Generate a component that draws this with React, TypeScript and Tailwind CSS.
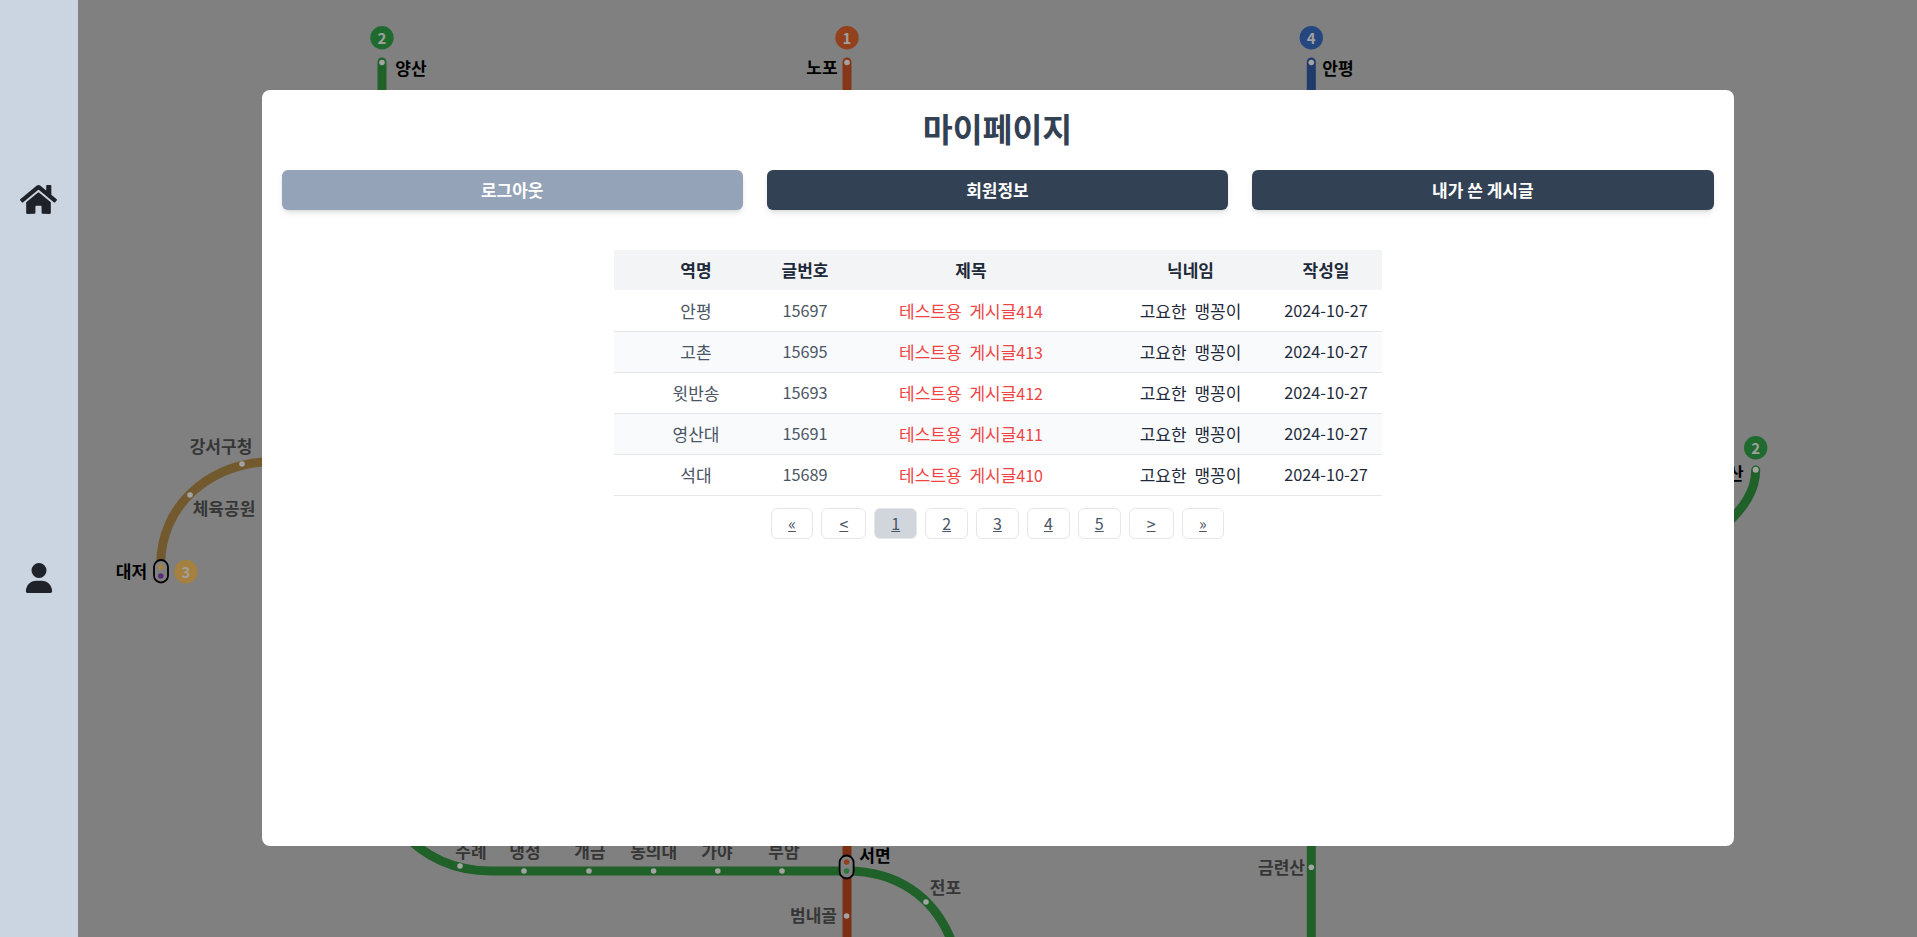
import React from 'react';
import { FaHome } from 'react-icons/fa';
import { FaUser } from 'react-icons/fa6';

const posts = [
  { station: '안평', id: 15697, no: 414 },
  { station: '고촌', id: 15695, no: 413 },
  { station: '윗반송', id: 15693, no: 412 },
  { station: '영산대', id: 15691, no: 411 },
  { station: '석대', id: 15689, no: 410 },
];

const pages = [
  { label: '«', padding: 'px-[16.5px]' },
  { label: '<', padding: 'px-[17px]' },
  { label: '1', padding: 'px-4' },
  { label: '2', padding: 'px-4' },
  { label: '3', padding: 'px-4' },
  { label: '4', padding: 'px-4' },
  { label: '5', padding: 'px-4' },
  { label: '>', padding: 'px-[17px]' },
  { label: '»', padding: 'px-[16.5px]' },
];

const GREEN = '#1f6128';
const RED = '#863718';
const BLUE = '#203a6b';
const BROWN = '#735a2e';
const DOT = '#a3a3a3';

const stops: [number, number][] = [
  [190, 495], [242, 464], [460, 866], [524, 871], [589, 871], [653.6, 871], [717.8, 871], [782, 871],
  [846.6, 916], [926, 902], [1311.3, 867.3],
];

const minorLabels: [string, number, number][] = [
  ['강서구청', 221, 445], ['체육공원', 224, 507], ['주례', 471, 850], ['냉정', 525, 850], ['개금', 590, 850],
  ['동의대', 653.6, 850], ['가야', 717, 850], ['부암', 784, 850], ['전포', 945.5, 886], ['범내골', 813.5, 914], ['금련산', 1281.5, 866],
];

const majorLabels: [string, number, number][] = [
  ['양산', 411, 67], ['노포', 822, 66], ['안평', 1338, 67], ['대저', 131.5, 570], ['서면', 875, 854], ['장산', 1728, 472],
];

const badges: [string, number, number, string][] = [
  ['2', 382, 37.7, '#1f6b2f'], ['1', 847, 37.7, '#93401c'], ['4', 1311.3, 37.7, '#25467f'], ['3', 186, 571.7, '#a5803f'], ['2', 1755.7, 447.7, '#1f6b2f'],
];

function SubwayMap() {
  return (
    <svg className="absolute left-[-78px] top-0" width="1917" height="937" viewBox="0 0 1917 937" fill="none">
      <g strokeWidth="9" strokeLinecap="round">
        <path d="M382 62 V120" stroke={GREEN} />
        <path d="M847 62 V120" stroke={RED} />
        <path d="M1311.3 62 V120" stroke={BLUE} />
        <path d="M160.7 565 C160.7 507 207 461 280 461" stroke={BROWN} />
        <path d="M400 830 C425 858 455 871 491 871 H847 C895 871 935 895 953 945" stroke={GREEN} />
        <path d="M847 830 V945" stroke="#7b3016" />
        <path d="M1311.3 830 V945" stroke={GREEN} />
        <path d="M1755.7 470 C1755.7 490 1745 508 1720 530" stroke={GREEN} />
      </g>
      <circle cx="382" cy="62.5" r="2.8" fill={DOT} />
      <circle cx="847" cy="62.5" r="2.8" fill={DOT} />
      <circle cx="1311.3" cy="62.5" r="2.8" fill={DOT} />
      <circle cx="1755.7" cy="469.7" r="3" fill={DOT} />
      {stops.map(([cx, cy]) => (
        <circle key={cx} cx={cx} cy={cy} r="2.8" fill={DOT} />
      ))}
      <rect x="154" y="560" width="14" height="22.5" rx="7" fill="#808080" stroke="#000" strokeWidth="1.8" />
      <circle cx="160.8" cy="567" r="2.8" fill="#a5803f" />
      <circle cx="160.8" cy="576" r="2.8" fill="#5b2a7a" />
      <rect x="839.6" y="855.5" width="14" height="23" rx="7" fill="#808080" stroke="#000" strokeWidth="1.8" />
      <circle cx="846.6" cy="862" r="2.8" fill="#93401c" />
      <circle cx="846.6" cy="871" r="2.8" fill="#2a7a38" />
      {minorLabels.map(([label, x, y]) => (
        <text key={label} x={x} y={y} textAnchor="middle" dominantBaseline="central" className="fill-[#363636] text-[17px] font-bold">
          {label}
        </text>
      ))}
      {majorLabels.map(([label, x, y]) => (
        <text key={label} x={x} y={y} textAnchor="middle" dominantBaseline="central" className="fill-black text-[17px] font-bold">
          {label}
        </text>
      ))}
      {badges.map(([label, cx, cy, color]) => (
        <g key={cx}>
          <circle cx={cx} cy={cy} r="11.7" fill={color} />
          <text x={cx} y={cy} textAnchor="middle" dominantBaseline="central" className="fill-[#a0a0a0] text-[15px] font-bold">
            {label}
          </text>
        </g>
      ))}
    </svg>
  );
}

export default function App() {
  return (
    <div className="flex h-[937px] overflow-hidden font-['Noto_Sans_CJK_KR','Noto_Sans',sans-serif]">
      <aside className="flex w-[78px] shrink-0 flex-col items-center gap-[345px] bg-[#cbd5e1] pt-[181px] pr-px text-[#1f2329]">
        <FaHome size={37} />
        <FaUser size={30} />
      </aside>

      <main className="relative flex flex-1 items-start justify-center overflow-hidden bg-[#808080] pt-[90px]">
        <SubwayMap />

        <div className="relative h-[756px] w-[1472px] rounded-lg bg-white p-5">
          <h1 className="mb-6 text-center text-[32.5px] leading-9 font-bold text-[#334155]">마이페이지</h1>

          <div className="grid grid-cols-3 gap-6 text-[17px] [word-spacing:4px]">
            <button className="h-10 rounded-md bg-[#94a3b8] font-semibold text-white shadow-md">로그아웃</button>
            <button className="h-10 rounded-md bg-[#334155] font-semibold text-white shadow-md">회원정보</button>
            <button className="h-10 rounded-md bg-[#334155] font-semibold text-white shadow-md">내가 쓴 게시글</button>
          </div>

          <table className="mx-auto mt-10 w-[768px] table-fixed text-center text-[16.3px]">
            <colgroup>
              <col className="w-[165px]" />
              <col className="w-[53px]" />
              <col className="w-[279px]" />
              <col className="w-[160px]" />
              <col className="w-[111px]" />
            </colgroup>
            <thead>
              <tr className="h-10 bg-gray-100 text-[17px] font-semibold text-gray-800">
                <th className="font-semibold">역명</th>
                <th className="font-semibold whitespace-nowrap">글번호</th>
                <th className="font-semibold">제목</th>
                <th className="font-semibold">닉네임</th>
                <th className="font-semibold">작성일</th>
              </tr>
            </thead>
            <tbody>
              {posts.map((post, i) => (
                <tr key={post.id} className={`h-[41px] border-b border-gray-200 ${i % 2 === 1 ? 'bg-[#f8fafc]' : 'bg-white'}`}>
                  <td className="text-[17px] text-gray-600">{post.station}</td>
                  <td className="text-gray-600">{post.id}</td>
                  <td className="text-[17px] whitespace-nowrap text-[#ef4444] [word-spacing:4px]">
                    테스트용 게시글<span className="text-base">{post.no}</span>
                  </td>
                  <td className="text-[17px] whitespace-nowrap text-gray-800 [word-spacing:4px]">고요한 맹꽁이</td>
                  <td className="whitespace-nowrap text-gray-800">2024-10-27</td>
                </tr>
              ))}
            </tbody>
          </table>

          <div className="mt-3 flex justify-center gap-2">
            {pages.map((page) => (
              <a
                key={page.label}
                href="#"
                className={`flex h-[31px] items-center rounded-md border border-gray-200 text-base text-gray-600 underline ${page.padding} ${page.label === '1' ? 'bg-gray-300' : 'bg-white'}`}
              >
                {page.label}
              </a>
            ))}
          </div>
        </div>
      </main>
    </div>
  );
}
